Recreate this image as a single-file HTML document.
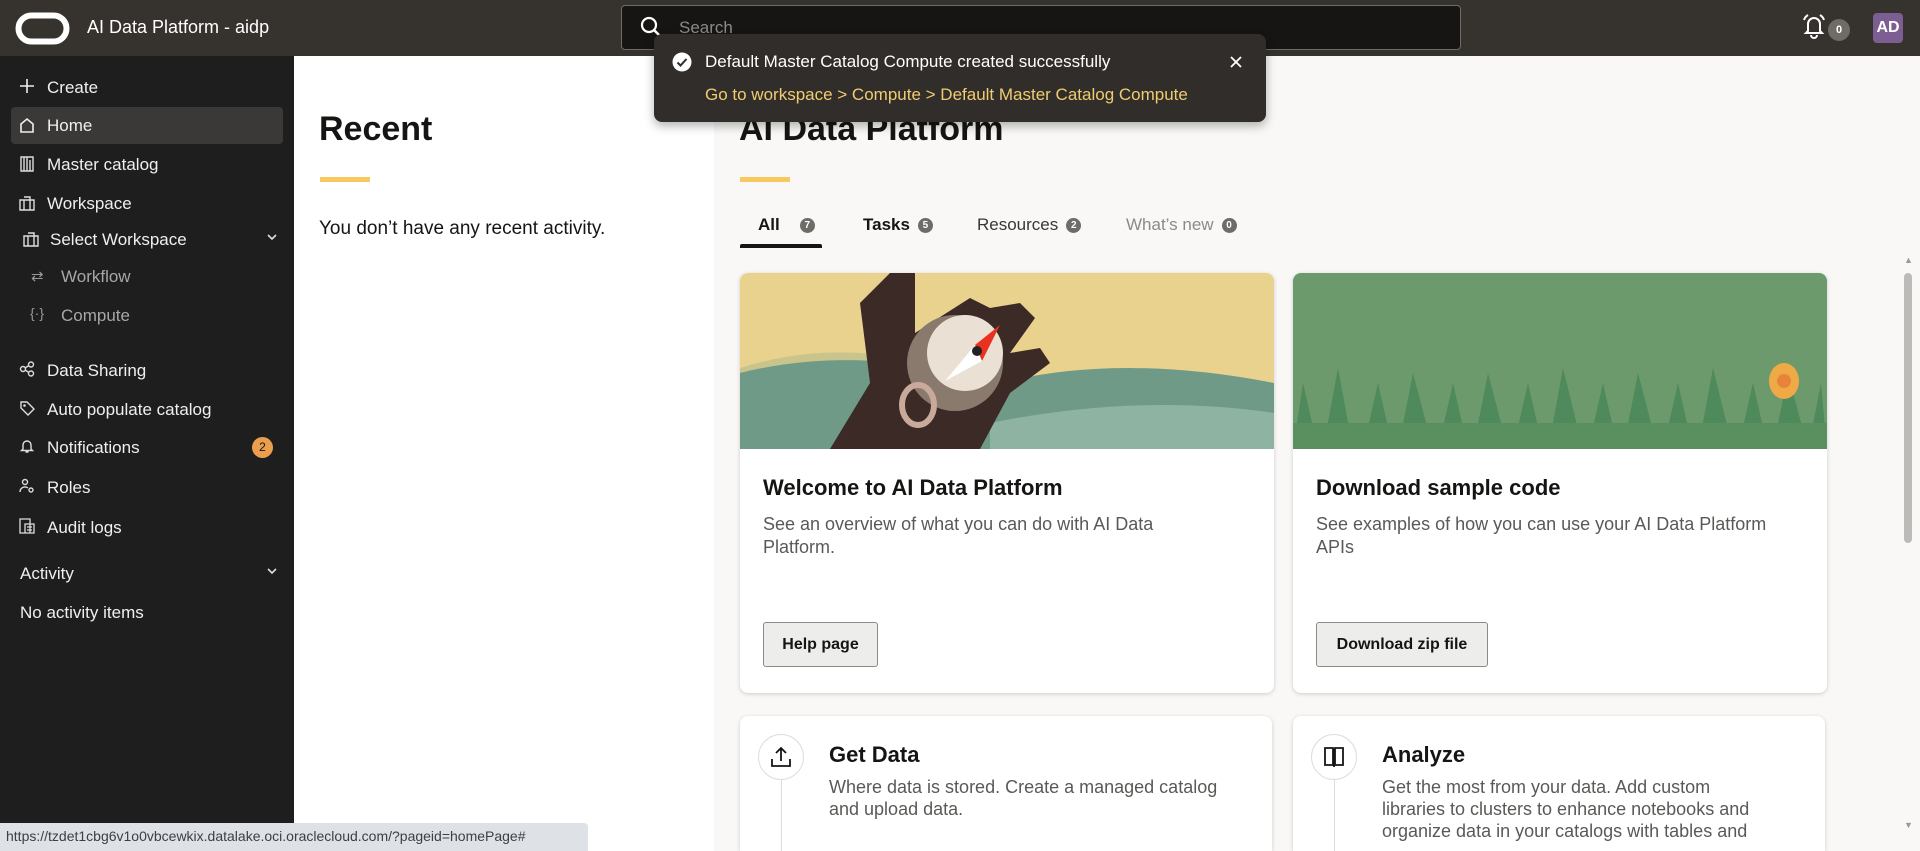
<!DOCTYPE html>
<html style="overflow:hidden;height:851px"><head><meta charset="utf-8"><style>
*{margin:0;padding:0;box-sizing:border-box}
body{width:1920px;height:851px;overflow:hidden;font-family:"Liberation Sans",sans-serif;background:#f9f8f6;position:relative}
.a{position:absolute;white-space:nowrap}
#top{left:0;top:0;width:1920px;height:56px;background:#36322d}
#side{left:0;top:56px;width:294px;height:795px;background:#1e1e1e}
#recent{left:294px;top:56px;width:420px;height:795px;background:#fff}
.si{color:#f1efed;font-size:17px;left:47px}
.sub{color:#a9a7a4;font-size:17px;left:61px}
.ic{position:absolute;left:19px}
.ybar{height:5px;width:50px;background:#f7c95e}
.card{background:#fff;border-radius:8px;box-shadow:0 1px 4px rgba(0,0,0,.18);overflow:hidden}
.ct{font-size:22px;font-weight:bold;color:#161513}
.cd{font-size:18px;color:#5b5956;line-height:23px;white-space:normal}
.btn{border:1px solid #8d8a86;background:#ededeb;border-radius:3px;font-size:16px;font-weight:bold;color:#161513;display:flex;align-items:center;justify-content:center}
.badge{display:inline-block;width:15px;height:15px;border-radius:50%;background:#6f6c68;color:#fff;font-size:10px;font-weight:bold;text-align:center;line-height:15px;vertical-align:middle;margin-left:8px}
.tab{font-size:17px;top:215px;color:#161513}
</style></head><body>
<div id="top" class="a"></div>
<svg class="a" style="left:15px;top:12px" width="55" height="33"><rect x="3.5" y="3.5" width="48" height="26" rx="13" fill="none" stroke="#fff" stroke-width="6"/></svg>
<div class="a" style="left:87px;top:17px;color:#fff;font-size:18px">AI Data Platform - aidp</div>
<div class="a" style="left:621px;top:5px;width:840px;height:45px;background:#161513;border:1px solid #6f6c68;border-radius:4px"></div>
<svg class="a" style="left:640px;top:16px" width="22" height="22"><circle cx="9" cy="9" r="7" fill="none" stroke="#fff" stroke-width="2.2"/><line x1="14" y1="14" x2="20" y2="20" stroke="#fff" stroke-width="2.5"/></svg>
<div class="a" style="left:679px;top:18px;color:#8d8a86;font-size:17px">Search</div>
<svg class="a" style="left:1799px;top:11px" width="30" height="30" viewBox="0 0 30 30"><path d="M9 20V13a6 6 0 0 1 12 0v7l2 2H7z M12 24a3 3 0 0 0 6 0" fill="none" stroke="#fff" stroke-width="2"/><path d="M5 9a9 9 0 0 1 4-5 M25 9a9 9 0 0 0-4-5" fill="none" stroke="#fff" stroke-width="2"/></svg>
<div class="a" style="left:1828px;top:19px;width:22px;height:22px;border-radius:50%;background:#6f6c68;color:#fff;font-size:11px;font-weight:bold;text-align:center;line-height:22px">0</div>
<div class="a" style="left:1873px;top:13px;width:30px;height:30px;border-radius:4px;background:#7d5e93;color:#fff;font-size:16px;font-weight:bold;text-align:center;line-height:30px">AD</div>

<div id="side" class="a"></div>
<div class="a" style="left:11px;top:107px;width:272px;height:37px;background:#3a3938;border-radius:4px"></div>
<svg class="ic" style="top:78px" width="16" height="16"><path d="M8 1v14M1 8h14" stroke="#eee" stroke-width="1.6"/></svg>
<div class="a si" style="top:78px">Create</div>
<svg class="ic" style="top:117px" width="16" height="16"><path d="M2 15V7l6-5 6 5v8z" fill="none" stroke="#eee" stroke-width="1.6"/></svg>
<div class="a si" style="top:116px">Home</div>
<svg class="ic" style="top:156px" width="16" height="16"><path d="M2 1h12v14H2zM5 1v14M8 1v14M11 4v11" fill="none" stroke="#ddd" stroke-width="1.4"/></svg>
<div class="a si" style="top:155px">Master catalog</div>
<svg class="ic" style="top:195px" width="16" height="16"><path d="M1 5h14v10H1zM5 2h6v3M5 5v10M11 5v10" fill="none" stroke="#ddd" stroke-width="1.4"/></svg>
<div class="a si" style="top:194px">Workspace</div>
<svg class="ic" style="left:23px;top:231px" width="16" height="16"><path d="M1 5h14v10H1zM5 2h6v3M5 5v10M11 5v10" fill="none" stroke="#ddd" stroke-width="1.4"/></svg>
<div class="a si" style="left:50px;top:230px">Select Workspace</div>
<svg class="a" style="left:266px;top:232px" width="12" height="10"><path d="M2 3l4 4 4-4" fill="none" stroke="#ddd" stroke-width="1.6"/></svg>
<div class="a" style="left:31px;top:267px;color:#999;font-size:15px">⇄</div>
<div class="a sub" style="top:267px">Workflow</div>
<div class="a" style="left:30px;top:305px;color:#999;font-size:14px">{·}</div>
<div class="a sub" style="top:306px">Compute</div>
<svg class="ic" style="top:361px" width="16" height="16"><circle cx="4" cy="8" r="2.5" fill="none" stroke="#ddd" stroke-width="1.4"/><circle cx="12" cy="3.5" r="2.5" fill="none" stroke="#ddd" stroke-width="1.4"/><circle cx="12" cy="12.5" r="2.5" fill="none" stroke="#ddd" stroke-width="1.4"/><path d="M6 7l4-2.5M6 9l4 2.5" stroke="#ddd" stroke-width="1.4"/></svg>
<div class="a si" style="top:361px">Data Sharing</div>
<svg class="ic" style="top:400px" width="16" height="16"><path d="M2 2h6l7 7-6 6-7-7z" fill="none" stroke="#ddd" stroke-width="1.4"/><circle cx="5.5" cy="5.5" r="1.3" fill="#ddd"/></svg>
<div class="a si" style="top:400px">Auto populate catalog</div>
<svg class="ic" style="top:438px" width="16" height="16"><path d="M4 11V7a4 4 0 0 1 8 0v4l1.5 1.5h-11zM6.5 14h3" fill="none" stroke="#ddd" stroke-width="1.4"/></svg>
<div class="a si" style="top:438px">Notifications</div>
<div class="a" style="left:252px;top:437px;width:21px;height:21px;border-radius:50%;background:#eb9e4d;color:#161513;font-size:12px;text-align:center;line-height:21px">2</div>
<svg class="ic" style="top:478px" width="16" height="16"><circle cx="6" cy="4" r="2.5" fill="none" stroke="#ddd" stroke-width="1.4"/><path d="M1 14a5 5 0 0 1 8-4" fill="none" stroke="#ddd" stroke-width="1.4"/><circle cx="12" cy="12" r="2" fill="none" stroke="#ddd" stroke-width="1.4"/></svg>
<div class="a si" style="top:478px">Roles</div>
<svg class="ic" style="top:518px" width="16" height="16"><path d="M1 1h10v14H1zM6 6h9v9H6zM8 9h5M8 12h5" fill="none" stroke="#ddd" stroke-width="1.3"/></svg>
<div class="a si" style="top:518px">Audit logs</div>
<div class="a si" style="left:20px;top:564px">Activity</div>
<svg class="a" style="left:266px;top:566px" width="12" height="10"><path d="M2 3l4 4 4-4" fill="none" stroke="#ddd" stroke-width="1.6"/></svg>
<div class="a si" style="left:20px;top:603px">No activity items</div>

<div id="recent" class="a"></div>
<div class="a" style="left:319px;top:110px;font-size:34px;font-weight:bold;color:#161513">Recent</div>
<div class="a ybar" style="left:320px;top:177px"></div>
<div class="a" style="left:319px;top:218px;font-size:19px;color:#161513">You don’t have any recent activity.</div>

<div class="a" style="left:739px;top:110px;font-size:34px;font-weight:bold;color:#161513">AI Data Platform</div>
<div class="a ybar" style="left:740px;top:177px"></div>
<div class="a tab" style="left:758px;font-weight:bold">All<span class="badge" style="margin-left:20px">7</span></div>
<div class="a" style="left:740px;top:244px;width:82px;height:4px;background:#161513;border-radius:2px 2px 0 0"></div>
<div class="a tab" style="left:863px;font-weight:bold">Tasks<span class="badge">5</span></div>
<div class="a tab" style="left:977px;color:#3a3632">Resources<span class="badge">2</span></div>
<div class="a tab" style="left:1126px;color:#8d8a86">What’s new<span class="badge">0</span></div>

<div class="a card" style="left:740px;top:273px;width:534px;height:420px">
<svg width="534" height="176" viewBox="0 0 534 176" style="display:block"><rect width="534" height="176" fill="#e8d28d"/><path d="M0 95 Q80 70 160 85 L160 176 L0 176z" fill="#c9c48c"/><path d="M0 100 Q120 70 260 110 Q380 80 534 110 V176 H0z" fill="#6f9a88"/><path d="M250 150 Q400 120 534 140 V176 H250z" fill="#8fb3a3"/><path d="M90 176 L130 110 L120 30 L150 0 L175 0 L175 60 L230 25 L250 35 L280 30 L295 45 L270 80 L300 75 L310 90 L270 120 L240 176z" fill="#3b2a26"/><circle cx="215" cy="90" r="48" fill="#8a7a6e"/><circle cx="225" cy="80" r="38" fill="#eae0d3"/><path d="M235 72 L260 52 L242 88z" fill="#e8321f"/><path d="M235 72 L205 108 L242 88z" fill="#fff"/><circle cx="237" cy="78" r="5" fill="#222"/><ellipse cx="178" cy="132" rx="16" ry="20" fill="none" stroke="#c9a99a" stroke-width="6"/></svg>
<div class="a ct" style="left:23px;top:202px">Welcome to AI Data Platform</div>
<div class="a cd" style="left:23px;top:240px;width:430px">See an overview of what you can do with AI Data Platform.</div>
<div class="a btn" style="left:23px;top:349px;width:115px;height:45px">Help page</div>
</div>
<div class="a card" style="left:1293px;top:273px;width:534px;height:420px">
<svg width="534" height="176" viewBox="0 0 534 176" style="display:block"><rect width="534" height="176" fill="#6d9a6d"/><g fill="#4f8a5c"><path d="M0 176 L10 110 L25 176z M30 176 L45 95 L60 176z M70 176 L85 110 L100 176z M105 176 L120 100 L140 176z M145 176 L160 110 L175 176z M180 176 L195 100 L215 176z M220 176 L235 110 L250 176z M255 176 L270 95 L290 176z M295 176 L310 110 L325 176z M330 176 L345 100 L365 176z M370 176 L385 110 L400 176z M405 176 L420 95 L440 176z M445 176 L460 110 L475 176z M480 176 L495 100 L515 176z M515 176 L528 110 L534 176z"/></g><rect y="150" width="534" height="26" fill="#5a8f5f"/><ellipse cx="491" cy="108" rx="15" ry="18" fill="#efaa45"/><circle cx="491" cy="108" r="7" fill="#e8833a"/></svg>
<div class="a ct" style="left:23px;top:202px">Download sample code</div>
<div class="a cd" style="left:23px;top:240px;width:490px">See examples of how you can use your AI Data Platform APIs</div>
<div class="a btn" style="left:23px;top:349px;width:172px;height:45px">Download zip file</div>
</div>

<div class="a card" style="left:740px;top:716px;width:532px;height:135px;border-radius:8px 8px 0 0">
<div class="a" style="left:18px;top:18px;width:46px;height:46px;border-radius:50%;border:1px solid #ddd;background:#fff"></div>
<svg class="a" style="left:30px;top:29px" width="22" height="24"><path d="M11 16V3M6 8l5-5 5 5M2 14v7h18v-7" fill="none" stroke="#161513" stroke-width="1.8"/></svg>
<div class="a" style="left:41px;top:64px;width:1px;height:80px;background:#ddd"></div>
<div class="a ct" style="left:89px;top:26px">Get Data</div>
<div class="a cd" style="left:89px;top:60px;width:420px;line-height:22px">Where data is stored. Create a managed catalog and upload data.</div>
</div>
<div class="a card" style="left:1293px;top:716px;width:532px;height:135px;border-radius:8px 8px 0 0">
<div class="a" style="left:18px;top:18px;width:46px;height:46px;border-radius:50%;border:1px solid #ddd;background:#fff"></div>
<svg class="a" style="left:30px;top:29px" width="22" height="24"><path d="M2 3h8v17H2zM12 3h8v17h-8zM11 4v18" fill="none" stroke="#161513" stroke-width="1.8"/></svg>
<div class="a" style="left:41px;top:64px;width:1px;height:80px;background:#ddd"></div>
<div class="a ct" style="left:89px;top:26px">Analyze</div>
<div class="a cd" style="left:89px;top:60px;width:390px;line-height:22px">Get the most from your data. Add custom libraries to clusters to enhance notebooks and organize data in your catalogs with tables and</div>
</div>

<div class="a" style="left:1904px;top:255px;width:7px;height:8px;color:#999;font-size:9px">▲</div>
<div class="a" style="left:1904px;top:273px;width:8px;height:270px;background:#bdbbb8;border-radius:4px"></div>
<div class="a" style="left:1904px;top:820px;color:#999;font-size:9px">▼</div>

<div class="a" style="left:654px;top:34px;width:612px;height:88px;background:#312d2a;border-radius:8px;box-shadow:0 4px 10px rgba(0,0,0,.3)"></div>
<svg class="a" style="left:672px;top:52px" width="20" height="20"><circle cx="10" cy="10" r="9.5" fill="#fff"/><path d="M5.5 10.5l3 3 6-6.5" fill="none" stroke="#312d2a" stroke-width="2"/></svg>
<div class="a" style="left:705px;top:52px;color:#fff;font-size:17px">Default Master Catalog Compute created successfully</div>
<svg class="a" style="left:1229px;top:55px" width="14" height="14"><path d="M2 2l10 10M12 2L2 12" stroke="#fff" stroke-width="1.8"/></svg>
<div class="a" style="left:705px;top:85px;color:#f0cc71;font-size:17px">Go to workspace &gt; Compute &gt; Default Master Catalog Compute</div>

<div class="a" style="left:0;top:823px;width:588px;height:28px;background:#dee1e6;border-top-right-radius:4px;color:#3c4043;font-size:14px;padding:5px 0 0 6px">https://tzdet1cbg6v1o0vbcewkix.datalake.oci.oraclecloud.com/?pageid=homePage#</div>
</body></html>
